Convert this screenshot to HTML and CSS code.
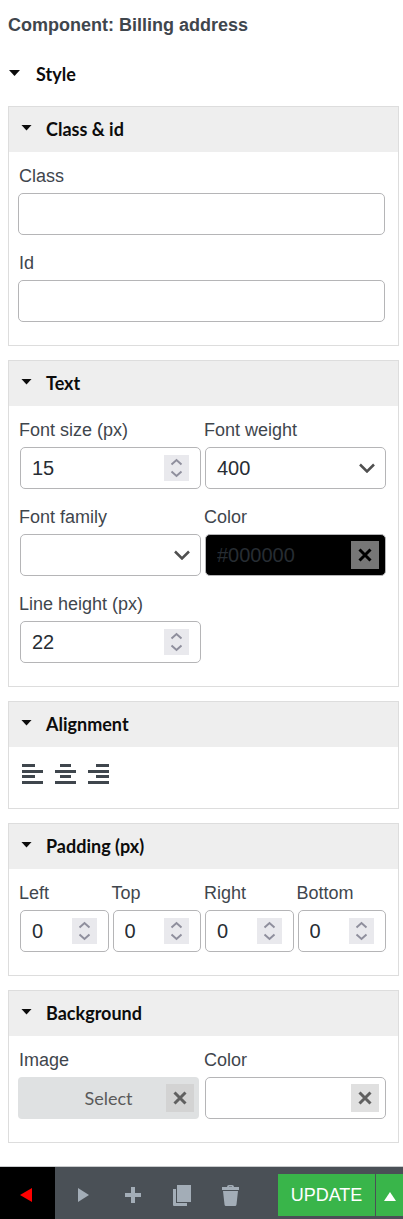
FILE: index.html
```html
<!DOCTYPE html>
<html lang="en">
  <head>
    <meta charset="utf-8" />
    <meta name="viewport" content="width=device-width, initial-scale=1" />
    <title>Component: Billing address</title>
    <link rel="stylesheet" href="styles.css" />
  </head>
  <body>
    <form class="editor">
      <h1 class="title">Component: Billing address</h1>

      <details class="style" open>
        <summary class="style-header">Style</summary>

        <details class="panel" open>
          <summary class="panel-header">Class &amp; id</summary>
          <div class="panel-body">
            <div class="field wide">
              <label for="class">Class</label>
              <input class="control" id="class" type="text" />
            </div>
            <div class="field wide">
              <label for="id">Id</label>
              <input class="control" id="id" type="text" />
            </div>
          </div>
        </details>

        <details class="panel" open>
          <summary class="panel-header">Text</summary>
          <div class="panel-body two-cols">
            <div class="field">
              <label for="font-size">Font size (px)</label>
              <input class="control number" id="font-size" type="number" value="15" />
            </div>
            <div class="field">
              <label for="font-weight">Font weight</label>
              <select class="control select" id="font-weight">
                <option>400</option>
                <option>700</option>
              </select>
            </div>
            <div class="field">
              <label for="font-family">Font family</label>
              <select class="control select" id="font-family">
                <option></option>
                <option>Arial</option>
                <option>Lato</option>
              </select>
            </div>
            <div class="field">
              <label for="text-color">Color</label>
              <input class="control color-black" id="text-color" type="text" value="#000000" />
              <button class="clear clear-dark" type="button" aria-label="Clear color">
                <svg width="14" height="14" viewBox="0 0 14 14"><path d="M1.5 1.5l11 11M12.5 1.5l-11 11" /></svg>
              </button>
            </div>
            <div class="field">
              <label for="line-height">Line height (px)</label>
              <input class="control number" id="line-height" type="number" value="22" />
            </div>
          </div>
        </details>

        <details class="panel" open>
          <summary class="panel-header">Alignment</summary>
          <div class="panel-body align">
            <button class="align-button" type="button" aria-label="Align left">
              <svg width="21" height="20" viewBox="0 0 21 20"><path d="M0 0h13v3H0zM0 6h21v3H0zM0 11h13v3H0zM0 17h21v3H0z" /></svg>
            </button>
            <button class="align-button" type="button" aria-label="Align center">
              <svg width="21" height="20" viewBox="0 0 21 20"><path d="M5 0h11v3H5zM0 6h21v3H0zM5 11h11v3H5zM0 17h21v3H0z" /></svg>
            </button>
            <button class="align-button" type="button" aria-label="Align right">
              <svg width="21" height="20" viewBox="0 0 21 20"><path d="M8 0h13v3H8zM0 6h21v3H0zM8 11h13v3H8zM0 17h21v3H0z" /></svg>
            </button>
          </div>
        </details>

        <details class="panel" open>
          <summary class="panel-header">Padding (px)</summary>
          <div class="panel-body four-cols">
            <div class="field">
              <label for="padding-left">Left</label>
              <input class="control number" id="padding-left" type="number" value="0" />
            </div>
            <div class="field">
              <label for="padding-top">Top</label>
              <input class="control number" id="padding-top" type="number" value="0" />
            </div>
            <div class="field">
              <label for="padding-right">Right</label>
              <input class="control number" id="padding-right" type="number" value="0" />
            </div>
            <div class="field">
              <label for="padding-bottom">Bottom</label>
              <input class="control number" id="padding-bottom" type="number" value="0" />
            </div>
          </div>
        </details>

        <details class="panel" open>
          <summary class="panel-header">Background</summary>
          <div class="panel-body two-cols">
            <div class="field">
              <label for="bg-image">Image</label>
              <button class="select-image" id="bg-image" type="button">Select</button>
              <button class="clear clear-image" type="button" aria-label="Clear image">
                <svg width="14" height="14" viewBox="0 0 14 14"><path d="M1.5 1.5l11 11M12.5 1.5l-11 11" /></svg>
              </button>
            </div>
            <div class="field">
              <label for="bg-color">Color</label>
              <input class="control" id="bg-color" type="text" />
              <button class="clear" type="button" aria-label="Clear color">
                <svg width="14" height="14" viewBox="0 0 14 14"><path d="M1.5 1.5l11 11M12.5 1.5l-11 11" /></svg>
              </button>
            </div>
          </div>
        </details>
      </details>
    </form>

    <footer class="toolbar">
      <button class="tool tool-back" type="button" aria-label="Back">
        <svg width="12" height="14" viewBox="0 0 12 14"><path d="M12 0v14L0 7z" /></svg>
      </button>
      <div class="tools">
        <button class="tool" type="button" aria-label="Forward">
          <svg width="12" height="14" viewBox="0 0 12 14"><path d="M0 0v14l11-7z" /></svg>
        </button>
        <button class="tool" type="button" aria-label="Add">
          <svg width="16" height="16" viewBox="0 0 16 16"><path d="M6 0h4v6h6v4h-6v6H6v-6H0V6h6z" /></svg>
        </button>
        <button class="tool" type="button" aria-label="Copy">
          <svg width="18" height="21" viewBox="0 0 18 21"><path d="M4 0h14v17H4zM0 4h3v14h11v3H1q-1 0-1-1z" /></svg>
        </button>
        <button class="tool" type="button" aria-label="Delete">
          <svg width="17" height="21" viewBox="0 0 17 21"><path d="M0 2h5q0-2 2-2h3q2 0 2 2h5v3H0zM7 1.5V2h3v-.5zM1 6h15l-1.5 13.5Q14.3 21 13 21H4q-1.3 0-1.5-1.5z" /></svg>
        </button>
      </div>
      <button class="update" type="button">UPDATE</button>
      <button class="update-more" type="button" aria-label="More update options">
        <svg width="12" height="9" viewBox="0 0 12 9"><path d="M6 0l6 9H0z" /></svg>
      </button>
    </footer>
  </body>
</html>
```
FILE: styles.css
```css
* {
  box-sizing: border-box;
}

body {
  margin: 0;
  background: #fff;
  color: #3f464d;
  font-family: "Liberation Sans", Arial, sans-serif;
  font-size: 18px;
}

button,
input,
select {
  margin: 0;
  font-family: inherit;
}

button {
  padding: 0;
  border: 0;
  cursor: pointer;
}

.editor {
  padding: 10px 4px 23px 8px;
}

.title {
  margin: 0;
  font-size: 18px;
  line-height: 30px;
}

/* collapsible headers */
summary {
  display: flex;
  align-items: center;
  color: #0c0c0c;
  font-family: Lato, sans-serif;
  font-size: 18px;
  font-weight: 700;
  list-style: none;
  cursor: pointer;
}

summary::before {
  content: "";
  width: 11px;
  height: 6px;
  margin-bottom: 2px;
  background: #0c0c0c;
  clip-path: polygon(0 0, 100% 0, 50% 100%);
}

.style-header {
  gap: 16px;
  height: 66px;
  padding-top: 2px;
  padding-left: 1px;
}

.panel {
  border: 1px solid #ddd;
}

.panel + .panel {
  margin-top: 14px;
}

.panel-header {
  gap: 14px;
  height: 45px;
  padding-bottom: 2px;
  padding-left: 12px;
  background: #eee;
}

.panel-body {
  display: grid;
  row-gap: 14px;
  padding: 10px 10px 23px 9px;
}

.two-cols {
  grid-template-columns: 1fr 1fr;
}

.four-cols {
  grid-template-columns: repeat(4, 1fr);
}

/* fields */
.field {
  position: relative;
  display: flex;
  flex-direction: column;
  min-width: 0;
}

.field label {
  margin-bottom: 3px;
  padding-left: 1px;
  line-height: 28px;
}

.control {
  width: auto;
  min-width: 0;
  height: 42px;
  margin: 0 2px;
  padding: 0 11px;
  border: 1px solid #b5b5b7;
  border-radius: 5px;
  background-color: #fff;
  color: #272d33;
  font-size: 20px;
}

.wide .control {
  margin: 0 3px 0 0;
}

.number {
  appearance: textfield;
  background-image: url("data:image/svg+xml,%3Csvg xmlns='http://www.w3.org/2000/svg' width='25' height='26'%3E%3Cpath fill='%23e9e9ed' d='M0 0h25v26H0z'/%3E%3Cpath fill='none' stroke='%238f8f9d' stroke-width='2' d='M7.5 9.5l5-4.5 5 4.5M7.5 16.5l5 4.5 5-4.5'/%3E%3C/svg%3E");
  background-position: right 11px center;
  background-repeat: no-repeat;
}

.number::-webkit-inner-spin-button,
.number::-webkit-outer-spin-button {
  margin: 0;
  appearance: none;
}

.select {
  appearance: none;
  background-image: url("data:image/svg+xml,%3Csvg xmlns='http://www.w3.org/2000/svg' width='16' height='10'%3E%3Cpath fill='none' stroke='%23505050' stroke-width='2.5' d='M1 1.5l7 7 7-7'/%3E%3C/svg%3E");
  background-position: right 10px center;
  background-repeat: no-repeat;
}

.color-black {
  background-color: #000;
}

.clear {
  position: absolute;
  right: 9px;
  bottom: 7px;
  display: flex;
  align-items: center;
  justify-content: center;
  width: 28px;
  height: 28px;
  background: #e0e0e0;
}

.clear svg {
  fill: none;
  stroke: #606060;
  stroke-width: 3px;
}

.clear-dark {
  background: #777;
}

.clear-dark svg {
  stroke: #000;
}

.clear-image {
  background: #d3d3d3;
}

.select-image {
  height: 42px;
  margin-right: 4px;
  border-radius: 4px;
  background: #dfe1e2;
  color: #5a5a5a;
  font-family: Lato, sans-serif;
  font-size: 18px;
}

.align {
  display: flex;
  gap: 12px;
  padding: 17px 13px 24px;
}

.align-button {
  display: flex;
  background: none;
  fill: #3f464d;
}

/* bottom bar */
.toolbar {
  display: flex;
  align-items: center;
  height: 53px;
  border-top: 1px solid #c9cbcd;
  background: #4a5056;
}

.tools {
  display: flex;
  flex: 1;
  justify-content: space-around;
  padding: 0 23px 0 4px;
}

.tool {
  display: flex;
  align-items: center;
  justify-content: center;
  width: 48px;
  height: 52px;
  padding-top: 4px;
  background: none;
  fill: #a3adb7;
}

.tool-back {
  width: 55px;
  padding-right: 3px;
  background: #000;
  fill: #f00;
}

.update,
.update-more {
  height: 42px;
  margin-top: 4px;
  background: #39b54a;
  color: #fff;
  font-size: 18px;
  fill: #fff;
}

.update {
  width: 97px;
  margin-right: 1px;
}

.update-more {
  width: 27px;
}
```
